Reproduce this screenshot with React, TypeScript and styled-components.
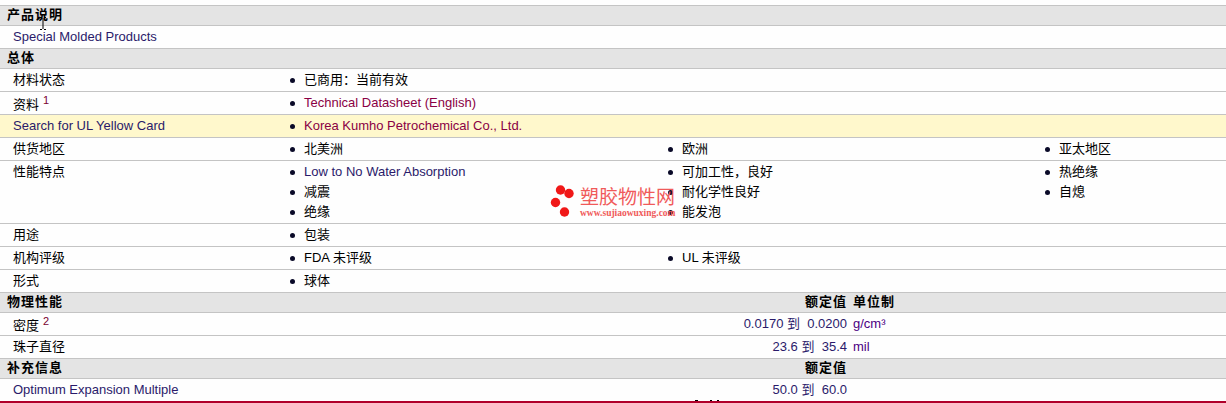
import React from "react";
import styled, { createGlobalStyle } from "styled-components";

const Global = createGlobalStyle`
  html, body { margin: 0; padding: 0; background: #fefefe; }
  body { width: 1226px; height: 403px; overflow: hidden; font-family: "Liberation Sans", "Noto Sans CJK SC", sans-serif; font-size: 13px; color: #000; }
`;

const Page = styled.div`
  position: relative;
  width: 1226px;
  height: 403px;
  padding-top: 6px;
  box-sizing: border-box;
  overflow: hidden;
`;

const Section = styled.div`
  height: 19px;
  display: grid;
  grid-template-columns: 805px 48px 1fr;
  border-top: 1px solid #c4c4c4;
  border-bottom: 1px solid #c4c4c4;
  margin-top: -1px;
  background-color: #e4e4e4;
  background-image: radial-gradient(#d9d9d9 0.5px, transparent 0.6px);
  background-size: 4px 4px;
  font-size: 13px;
  font-weight: 700;
  letter-spacing: 1px;
  line-height: 17px;
  color: #000;
`;

const SectionTitle = styled.span`
  padding-left: 7px;
`;

const SectionCol = styled.span`
  white-space: nowrap;
`;

const Row = styled.div<{ $h?: number; $bg?: string }>`
  height: ${(p) => p.$h ?? 22}px;
  display: grid;
  grid-template-columns: 285px 378px 377px 1fr;
  background: ${(p) => p.$bg ?? "transparent"};
  border-bottom: 1px solid #c4c4c4;
  line-height: 22px;
`;

const Label = styled.div<{ $cn?: boolean; $note?: boolean }>`
  padding-left: 13px;
  padding-top: ${(p) => (p.$note ? 2 : 0)}px;
  color: ${(p) => (p.$cn ? "#000" : "#2a1a6a")};
  white-space: nowrap;
`;

const Sup = styled.sup`
  font-size: 11px;
  line-height: 0;
  margin-left: 4px;
  color: #7a0030;
  vertical-align: 5px;
`;

const Cell = styled.ul`
  list-style: none;
  margin: 0;
  padding: 1px 0 0;
`;

const Item = styled.li<{ $tone?: "link" | "blue" }>`
  display: flex;
  align-items: center;
  height: 20px;
  line-height: 20px;
  white-space: pre;
  color: ${(p) => (p.$tone === "link" ? "#8a0044" : p.$tone === "blue" ? "#2a1a6a" : "#000")};
  &::before {
    content: "";
    width: 5px;
    height: 5px;
    margin: 1px 9px 0 5px;
    border-radius: 50%;
    background: #0a0a28;
    flex: none;
  }
`;

const ValueRow = styled.div`
  height: 22px;
  display: grid;
  grid-template-columns: 847px 6px 1fr;
  border-bottom: 1px solid #c4c4c4;
  line-height: 22px;
  position: relative;
`;

const ValueLabel = styled(Label)`
  position: absolute;
  left: 0;
  top: 0;
`;

const Value = styled.div`
  grid-column: 1;
  text-align: right;
  color: #2a1a6a;
  white-space: pre;
`;

const Unit = styled.div`
  grid-column: 3;
  color: #4b0082;
`;

const Divider = styled.div`
  height: 2px;
  background: #b0002a;
  position: absolute;
  left: 0;
  right: 0;
  top: 401px;
`;

const Ticks = styled.svg`
  position: absolute;
  left: 685px;
  top: 400px;
`;

const Watermark = styled.div`
  position: absolute;
  left: 550px;
  top: 184px;
  width: 130px;
  height: 36px;
  display: flex;
  gap: 4px;
`;

const WatermarkText = styled.div`
  color: #f05a5a;
  display: flex;
  flex-direction: column;
  padding-top: 4px;
`;

const WatermarkName = styled.span`
  font-size: 19px;
  line-height: 20px;
  white-space: nowrap;
`;

const WatermarkUrl = styled.span`
  font-family: "Liberation Serif", serif;
  font-size: 9.5px;
  font-weight: 700;
  line-height: 10px;
  white-space: nowrap;
`;

const Caret = styled.svg`
  position: absolute;
  left: 39px;
  top: 17px;
`;

const App: React.FC = () => (
  <Page>
    <Global />
    <Section><SectionTitle>产品说明</SectionTitle></Section>
    <Row><Label>Special Molded Products</Label></Row>
    <Section><SectionTitle>总体</SectionTitle></Section>
    <Row><Label $cn>材料状态</Label><Cell><Item>已商用：当前有效</Item></Cell></Row>
    <Row><Label $cn $note>资料<Sup>1</Sup></Label><Cell><Item $tone="link">Technical Datasheet (English)</Item></Cell></Row>
    <Row $bg="#fff8cc"><Label>Search for UL Yellow Card</Label><Cell><Item $tone="link">Korea Kumho Petrochemical Co., Ltd.</Item></Cell></Row>
    <Row>
      <Label $cn>供货地区</Label>
      <Cell><Item>北美洲</Item></Cell>
      <Cell><Item>欧洲</Item></Cell>
      <Cell><Item>亚太地区</Item></Cell>
    </Row>
    <Row $h={62}>
      <Label $cn>性能特点</Label>
      <Cell><Item $tone="blue">Low to No Water Absorption</Item><Item>减震</Item><Item>绝缘</Item></Cell>
      <Cell><Item>可加工性，良好</Item><Item>耐化学性良好</Item><Item>能发泡</Item></Cell>
      <Cell><Item>热绝缘</Item><Item>自熄</Item></Cell>
    </Row>
    <Row><Label $cn>用途</Label><Cell><Item>包装</Item></Cell></Row>
    <Row><Label $cn>机构评级</Label><Cell><Item>FDA 未评级</Item></Cell><Cell><Item>UL 未评级</Item></Cell></Row>
    <Row><Label $cn>形式</Label><Cell><Item>球体</Item></Cell></Row>
    <Section><SectionTitle>物理性能</SectionTitle><SectionCol>额定值</SectionCol><SectionCol>单位制</SectionCol></Section>
    <ValueRow><ValueLabel $cn $note>密度<Sup>2</Sup></ValueLabel><Value>0.0170 到  0.0200</Value><Unit>g/cm³</Unit></ValueRow>
    <ValueRow><ValueLabel $cn>珠子直径</ValueLabel><Value>23.6 到  35.4</Value><Unit>mil</Unit></ValueRow>
    <Section><SectionTitle>补充信息</SectionTitle><SectionCol>额定值</SectionCol></Section>
    <ValueRow><ValueLabel>Optimum Expansion Multiple</ValueLabel><Value>50.0 到  60.0</Value></ValueRow>
    <Divider />
    <Ticks width="36" height="2" viewBox="0 0 36 2" aria-hidden="true">
      <path d="M10 0h3v1h-3zM25 0h2v1h-2zM32 0h2v1h-2z" fill="#000" />
    </Ticks>
    <Watermark>
      <svg width="26" height="36" viewBox="0 0 26 36" aria-hidden="true">
        <circle cx="10.5" cy="6" r="4.7" fill="#f01818" />
        <circle cx="19" cy="9.5" r="4.7" fill="#f01818" />
        <circle cx="5.5" cy="18.5" r="4.7" fill="#f01818" />
        <circle cx="14.5" cy="28" r="4.7" fill="#f01818" />
      </svg>
      <WatermarkText>
        <WatermarkName>塑胶物性网</WatermarkName>
        <WatermarkUrl>www.sujiaowuxing.com</WatermarkUrl>
      </WatermarkText>
    </Watermark>
    <Caret width="8" height="14" viewBox="0 0 8 14" aria-hidden="true">
      <path d="M1 .5h2M5 .5h2M4 1v11M1 12.5h2M5 12.5h2" stroke="#000" fill="none" />
    </Caret>
  </Page>
);

export default App;
